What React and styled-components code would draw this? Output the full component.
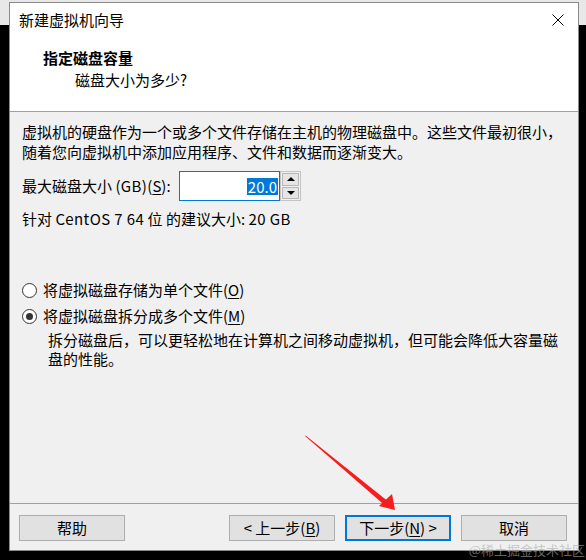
import React from "react";
import styled, { createGlobalStyle } from "styled-components";

const GlobalStyle = createGlobalStyle`
  html, body { margin: 0; padding: 0; background: #000; }
  * { box-sizing: border-box; }
`;

const FONT = `"Noto Sans CJK SC", "Noto Sans", sans-serif`;

const Page = styled.div`
  position: relative;
  width: 586px;
  height: 560px;
  overflow: hidden;
  padding: 2px 0 0 9px;
  background: linear-gradient(#e8e8e8 0 25px, #000 25px);
  font-family: ${FONT};
  font-size: 15px;
  color: #000;
`;

const Window = styled.div`
  width: 570px;
  height: 549px;
  border: 1px solid #8a8a8a;
  background: #f0f0f0;
  display: flex;
  flex-direction: column;
`;

const TitleBar = styled.div`
  height: 34px;
  flex: none;
  background: #fff;
  display: flex;
  justify-content: space-between;
  align-items: center;
  padding-left: 9px;
  line-height: 34px;
`;

const CloseButton = styled.div`
  width: 40px;
  height: 34px;
  display: flex;
  align-items: center;
  justify-content: center;
`;

const Header = styled.div`
  height: 75px;
  flex: none;
  background: #fff;
  border-bottom: 1px solid #a0a0a0;
  padding: 11px 0 0 33px;
`;

const HeaderTitle = styled.div`
  font-weight: bold;
  line-height: 20px;
`;

const HeaderSub = styled.div`
  margin-top: 2px;
  padding-left: 32px;
  line-height: 20px;
`;

const Body = styled.div`
  flex: 1;
  padding: 10px 0 0 12px;
`;

const Paragraph = styled.div`
  line-height: ${(p) => p.$lh || 20}px;
  margin-top: ${(p) => p.$mt || 0}px;
  padding-left: ${(p) => p.$indent || 0}px;
  white-space: nowrap;
`;

const Latin = styled.span`
  letter-spacing: 0.4px;
`;

const FieldRow = styled.div`
  margin-top: 9px;
  height: 30px;
  display: flex;
  align-items: center;
`;

const FieldLabel = styled.div`
  width: 157px;
  line-height: 20px;
  white-space: nowrap;
`;

const NumberBox = styled.div`
  width: 101px;
  height: 30px;
  border: 1px solid #0078d7;
  background: #fff;
  display: flex;
  justify-content: flex-end;
  align-items: center;
  padding-right: 1px;
`;

const Selected = styled.span`
  background: #0078d7;
  color: #fff;
  line-height: 17px;
  padding: 0 1px 0 1px;
`;

const Spinner = styled.div`
  width: 21px;
  height: 30px;
  display: flex;
  flex-direction: column;
  border: 1px solid #c4c4c4;
  background: #f0f0f0;
  padding: 1px;
  gap: 1px;
`;

const SpinButton = styled.div`
  flex: 1;
  background: #e5e5e5;
  border: 1px solid #b8b8b8;
  display: flex;
  align-items: center;
  justify-content: center;
  &::after {
    content: "";
    width: 0;
    height: 0;
    border-left: 4px solid transparent;
    border-right: 4px solid transparent;
    ${(p) =>
      p.$down
        ? "border-top: 4px solid #000;"
        : "border-bottom: 4px solid #000;"}
  }
`;

const RadioRow = styled.div`
  margin-top: ${(p) => p.$mt}px;
  display: flex;
  align-items: center;
  gap: 6px;
  line-height: 20px;
  white-space: nowrap;
`;

const RadioCircle = styled.span`
  width: 15px;
  height: 15px;
  border-radius: 50%;
  border: 1px solid #333;
  background: #fff;
  display: flex;
  align-items: center;
  justify-content: center;
  &::after {
    content: "";
    width: 7px;
    height: 7px;
    border-radius: 50%;
    background: ${(p) => (p.$checked ? "#333" : "transparent")};
  }
`;

const Mn = styled.span`
  text-decoration: underline;
  text-underline-offset: 2px;
`;

const Footer = styled.div`
  height: 47px;
  flex: none;
  border-top: 1px solid #a0a0a0;
  padding: 11px 11px 0 9px;
  display: flex;
  justify-content: space-between;
  align-items: flex-start;
`;

const ButtonGroup = styled.div`
  display: flex;
  gap: 10px;
`;

const Button = styled.div`
  width: 106px;
  height: 26px;
  background: #e1e1e1;
  border: ${(p) => (p.$primary ? "2px solid #0078d7" : "1px solid #adadad")};
  display: flex;
  align-items: center;
  justify-content: center;
  line-height: 20px;
  white-space: nowrap;
`;

const Overlay = styled.svg`
  position: absolute;
  left: 0;
  top: 0;
  pointer-events: none;
`;

const Watermark = styled.div`
  position: absolute;
  right: 1px;
  bottom: 3px;
  font-size: 13px;
  line-height: 15px;
  color: rgba(170, 170, 170, 0.6);
  white-space: nowrap;
`;

export default function App() {
  return (
    <>
      <GlobalStyle />
      <Page>
        <Window>
          <TitleBar>
            <span>新建虚拟机向导</span>
            <CloseButton>
              <svg width="12" height="12" viewBox="0 0 12 12">
                <path d="M0.5 0.5 L11.5 11.5 M11.5 0.5 L0.5 11.5" stroke="#000" strokeWidth="1" fill="none" />
              </svg>
            </CloseButton>
          </TitleBar>
          <Header>
            <HeaderTitle>指定磁盘容量</HeaderTitle>
            <HeaderSub>磁盘大小为多少?</HeaderSub>
          </Header>
          <Body>
            <Paragraph>
              虚拟机的硬盘作为一个或多个文件存储在主机的物理磁盘中。这些文件最初很小，
              <br />
              随着您向虚拟机中添加应用程序、文件和数据而逐渐变大。
            </Paragraph>
            <FieldRow>
              <FieldLabel>
                最大磁盘大小 <Latin>(GB)</Latin>(<Mn>S</Mn>):
              </FieldLabel>
              <NumberBox>
                <Selected>20.0</Selected>
              </NumberBox>
              <Spinner>
                <SpinButton />
                <SpinButton $down />
              </Spinner>
            </FieldRow>
            <Paragraph $mt={8}>
              针对 <Latin>CentOS 7 64</Latin> 位 的建议大小: <Latin>20 GB</Latin>
            </Paragraph>
            <RadioRow $mt={51}>
              <RadioCircle />
              <span>
                将虚拟磁盘存储为单个文件(<Mn>O</Mn>)
              </span>
            </RadioRow>
            <RadioRow $mt={6}>
              <RadioCircle $checked />
              <span>
                将虚拟磁盘拆分成多个文件(<Mn>M</Mn>)
              </span>
            </RadioRow>
            <Paragraph $mt={4} $lh={19} $indent={26}>
              拆分磁盘后，可以更轻松地在计算机之间移动虚拟机，但可能会降低大容量磁
              <br />
              盘的性能。
            </Paragraph>
          </Body>
          <Footer>
            <Button>帮助</Button>
            <ButtonGroup>
              <Button>
                &lt; 上一步(<Mn>B</Mn>)
              </Button>
              <Button $primary>
                下一步(<Mn>N</Mn>) &gt;
              </Button>
              <Button>取消</Button>
            </ButtonGroup>
          </Footer>
        </Window>
        <Overlay width="586" height="560" viewBox="0 0 586 560">
          <polygon points="305,436 305.6,435.4 387.6,501.1 384.4,504.9" fill="#f51d1d" />
          <polygon points="392,494 395,510 379,506" fill="#f51d1d" />
        </Overlay>
        <Watermark>@稀土掘金技术社区</Watermark>
      </Page>
    </>
  );
}
